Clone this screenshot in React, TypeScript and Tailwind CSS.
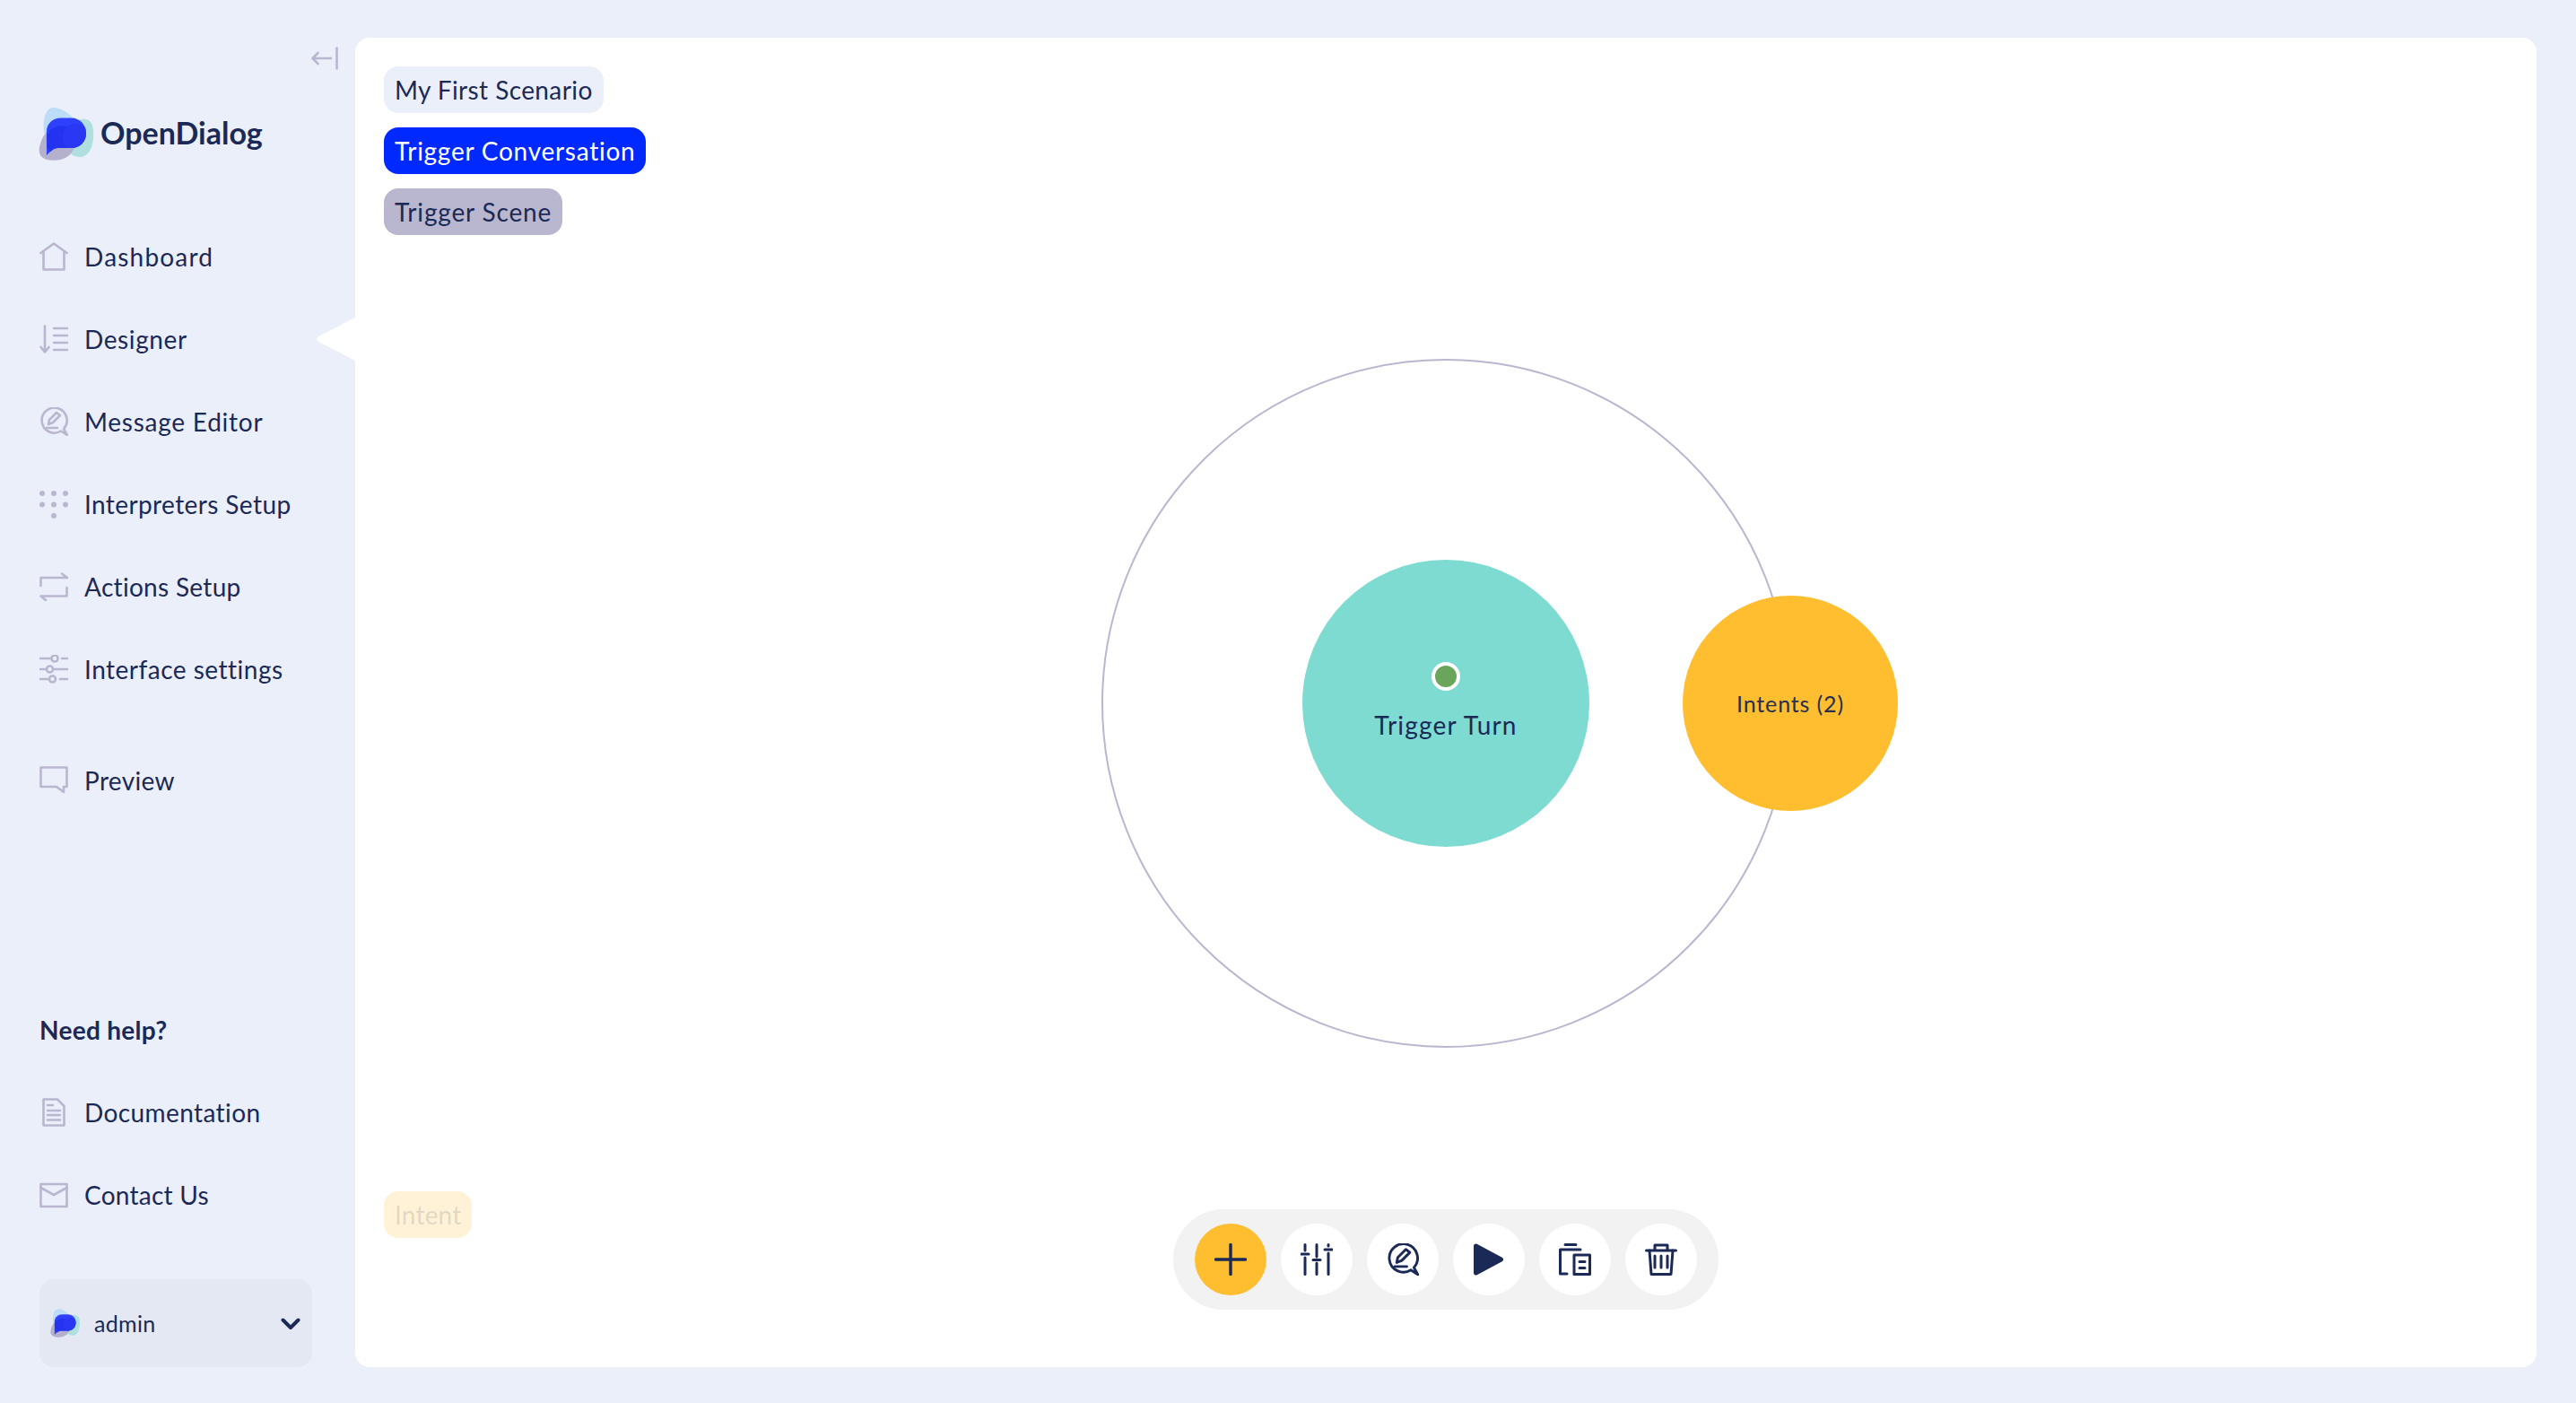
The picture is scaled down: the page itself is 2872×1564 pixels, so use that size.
import React from 'react';

const stroke = {
  fill: 'none',
  stroke: 'currentColor',
  strokeLinecap: 'round' as const,
  strokeLinejoin: 'round' as const,
};

function Logo({ className }: { className: string }) {
  return (
    <svg viewBox="40 55 190 190" className={className}>
      <defs>
        <clipPath id="bubble">
          <path d="M67 222V140C67 114 90 96 115 96H150C180 96 200 120 200 147C200 175 180 197 150 197H105C90 197 78 210 67 222Z" />
        </clipPath>
      </defs>
      <path fill="#bcdcf7" d="M57 130C55 90 68 60 90 60C115 62 145 80 165 105L165 130C140 190 100 190 75 170C62 160 58 150 57 130Z" />
      <path fill="#b0dfe0" d="M165 108C185 95 215 95 222 125C230 165 220 225 180 227C150 228 125 200 120 170Z" />
      <path fill="#b4b1cd" d="M42 205C45 170 65 130 100 125C140 125 165 160 160 195C150 225 120 240 85 238C60 238 42 225 42 205Z" />
      <path fill="#2e40fa" d="M67 222V140C67 114 90 96 115 96H150C180 96 200 120 200 147C200 175 180 197 150 197H105C90 197 78 210 67 222Z" />
      <g clipPath="url(#bubble)">
        <circle cx="115" cy="172" r="50" fill="#2433f0" />
        <circle cx="165" cy="160" r="45" fill="#2a38f4" />
      </g>
    </svg>
  );
}

const MessagePaths = () => (
  <>
    <path d="M27 24A14 14 0 1 0 24 26.5L31 31Z" />
    <path d="M10 19L11 14L19 6L23 9L15 17Z" />
    <path d="M8 23H20" />
  </>
);

const icons: Record<string, React.ReactNode> = {
  dashboard: (
    <>
      <path d="M1.5 12L16 1.5L30.5 12" />
      <path d="M4.5 10V30.5H27.5V10" />
    </>
  ),
  designer: (
    <>
      <path d="M6 1.5V30M1.5 25L6 30.5L10.5 25" />
      <path d="M16 4H31M16 12H31M16 20H31M16 28H31" />
    </>
  ),
  message: <MessagePaths />,
  interpreters: (
    <g fill="currentColor" stroke="none">
      <circle cx="3" cy="4" r="3" />
      <circle cx="16" cy="4" r="3" />
      <circle cx="29" cy="4" r="3" />
      <circle cx="3" cy="16.5" r="3" />
      <circle cx="16" cy="16.5" r="3" />
      <circle cx="29" cy="16.5" r="3" />
      <circle cx="16" cy="29" r="3" />
    </g>
  ),
  actions: (
    <>
      <path d="M1.5 15V6H31L25 1.5" />
      <path d="M30.5 17V26.5H1.5L7 31" />
    </>
  ),
  settings: (
    <>
      <path d="M1 4H13M25 4H31" />
      <circle cx="17" cy="4" r="3.5" />
      <path d="M1 16H7M16 16H31" />
      <circle cx="11.5" cy="16" r="3.5" />
      <path d="M1 27H10M23 27H31" />
      <circle cx="14.5" cy="27" r="3.5" />
    </>
  ),
  preview: <path d="M1.5 1.5H30.5V23H27V29L19 23H1.5Z" />,
  docs: (
    <>
      <path d="M4.5 1.5H20L27.5 9V30.5H4.5Z" />
      <path d="M9 8H15M9 14H23M9 19H23M9 24.5H23" />
    </>
  ),
  contact: (
    <>
      <path d="M1.5 4H30.5V29H1.5Z" />
      <path d="M1.5 8L16 16L30.5 8" />
    </>
  ),
};

function NavItem({
  icon,
  label,
  tracking,
  active,
}: {
  icon: string;
  label: string;
  tracking: string;
  active?: boolean;
}) {
  return (
    <div className="relative flex h-[92px] items-center pl-[44px]">
      <svg viewBox="0 0 32 32" strokeWidth={2.6} {...stroke} className="h-8 w-8 text-[#b9b7cf]">
        {icons[icon]}
      </svg>
      <span className={`ml-[18px] text-[28px] text-[#1b2956] ${tracking}`}>{label}</span>
      {active && (
        <svg viewBox="0 0 44 50" className="absolute top-[21px] right-0 h-[50px] w-[44px]">
          <path d="M44 1L3 22Q-1 25 3 28L44 49Z" fill="#ffffff" />
        </svg>
      )}
    </div>
  );
}

function ToolButton({ children, className }: { children: React.ReactNode; className: string }) {
  return <div className={`flex h-20 w-20 items-center justify-center rounded-full ${className}`}>{children}</div>;
}

export default function App() {
  return (
    <div className="flex h-screen w-full overflow-hidden bg-[#ebeffa] font-['Lato',sans-serif] text-[#1b2956]">
      <aside className="flex w-[396px] flex-col pb-[40px]">
        <div className="flex justify-end pt-[52px] pr-[19px]">
          <svg viewBox="0 0 30 26" strokeWidth={2.6} {...stroke} className="h-[26px] w-[30px] text-[#b9b7cf]">
            <path d="M1.5 13H22M7.5 7L1.5 13L7.5 19M28.5 1.5V24.5" />
          </svg>
        </div>
        <div className="mt-[40px] mb-[59px] flex h-[63px] items-center pl-[43px]">
          <Logo className="h-[63px] w-[63px]" />
          <span className="-mt-[3px] ml-[6px] text-[34px] leading-none font-bold">OpenDialog</span>
        </div>
        <NavItem icon="dashboard" label="Dashboard" tracking="tracking-[1.2px]" />
        <NavItem icon="designer" label="Designer" tracking="tracking-[0.6px]" active />
        <NavItem icon="message" label="Message Editor" tracking="tracking-[0.75px]" />
        <NavItem icon="interpreters" label="Interpreters Setup" tracking="tracking-[0.4px]" />
        <NavItem icon="actions" label="Actions Setup" tracking="tracking-[0.3px]" />
        <NavItem icon="settings" label="Interface settings" tracking="tracking-[0.5px]" />
        <div className="mt-8">
          <NavItem icon="preview" label="Preview" tracking="tracking-[0.35px]" />
        </div>
        <div className="mt-auto flex h-[92px] items-center pl-[44px] text-[28px] font-bold tracking-[0.3px]">Need help?</div>
        <NavItem icon="docs" label="Documentation" tracking="tracking-[0.4px]" />
        <NavItem icon="contact" label="Contact Us" tracking="tracking-[0.25px]" />
        <div className="mt-[48px] ml-[44px] flex h-[98px] w-[304px] items-center rounded-2xl bg-[#e4e8f3] pr-[13px] pl-[12px]">
          <Logo className="h-[34px] w-[34px]" />
          <span className="mt-[2px] ml-[15px] text-[25px] tracking-[0.3px]">admin</span>
          <svg viewBox="0 0 22 14" strokeWidth={4} {...stroke} className="mt-[2px] ml-auto h-[14px] w-[22px]">
            <path d="M2.5 2.5L11 11L19.5 2.5" />
          </svg>
        </div>
      </aside>

      <main className="relative my-[42px] mr-[44px] mb-[40px] flex-1 rounded-2xl bg-white">
        <div className="flex flex-col items-start gap-4 pt-8 pl-8 text-[28px] leading-[52px]">
          <div className="h-[52px] rounded-2xl bg-[#ebeffa] px-[12px] tracking-[0.4px]">My First Scenario</div>
          <div className="h-[52px] rounded-2xl bg-[#0029ff] px-[12px] tracking-[0.75px] text-white">Trigger Conversation</div>
          <div className="h-[52px] rounded-2xl bg-[#b9b7cf] px-[12px] tracking-[0.85px]">Trigger Scene</div>
        </div>

        {/* diagram, everything is placed from the centre of the big ring */}
        <div className="absolute top-[742px] left-1/2 h-0 w-0">
          <svg viewBox="0 0 770 770" className="absolute -top-[385px] -left-[385px] h-[770px] w-[770px]">
            <circle cx="385" cy="385" r="383" fill="none" stroke="#b9b7cf" strokeWidth={2} />
          </svg>
          <div className="absolute -top-[160px] -left-[160px] flex h-[320px] w-[320px] flex-col items-center rounded-full bg-[#7ddbd2] pt-[114px]">
            <div className="h-8 w-8 rounded-full border-4 border-white bg-[#6ba55b]" />
            <div className="mt-[21px] text-[28px] leading-[34px] tracking-[1.2px]">Trigger Turn</div>
          </div>
          <div className="absolute -top-[120px] left-[264px] flex h-[240px] w-[240px] items-center justify-center rounded-full bg-[#ffbe30] pt-[2px] text-[25px] tracking-[0.85px] text-[#28304f]">
            Intents (2)
          </div>
        </div>

        <div className="absolute bottom-[144px] left-8 h-[52px] rounded-2xl bg-[#ffbe30]/20 px-[12px] text-[28px] leading-[52px] tracking-[0.2px] text-[#1b2956]/15">
          Intent
        </div>

        <div className="absolute bottom-16 left-1/2 flex h-[112px] -translate-x-1/2 items-center gap-4 rounded-[56px] bg-[#f2f2f2] px-6">
          <ToolButton className="bg-[#ffbe30]">
            <svg viewBox="0 0 36 36" strokeWidth={3.4} {...stroke} className="h-9 w-9">
              <path d="M18 1.5V34.5M1.5 18H34.5" />
            </svg>
          </ToolButton>
          <ToolButton className="bg-white">
            <svg viewBox="0 0 36 36" strokeWidth={3} {...stroke} className="h-9 w-9">
              <path d="M5 1.5V8M5 16V34.5M1 12H9" />
              <path d="M18 1.5V15M18 22V34.5M14 18.5H22" />
              <path d="M31 1.5V3M31 11V34.5M27 7H35" />
            </svg>
          </ToolButton>
          <ToolButton className="bg-white">
            <svg viewBox="0 0 32 32" strokeWidth={2.6} {...stroke} className="h-9 w-9">
              <MessagePaths />
            </svg>
          </ToolButton>
          <ToolButton className="bg-white">
            <svg viewBox="0 0 36 36" className="h-9 w-9">
              <path d="M3.5 3L31.5 18L3.5 33Z" fill="currentColor" stroke="currentColor" strokeWidth={5} strokeLinejoin="round" />
            </svg>
          </ToolButton>
          <ToolButton className="bg-white">
            <svg viewBox="0 0 36 36" strokeWidth={3} {...stroke} className="h-9 w-9">
              <path d="M7 1.5H19M1.5 7H24M1.5 7V34H9" />
              <path d="M17 13H34.5V34.5H17Z" />
              <path d="M23 20.5H29M23 27.5H29" />
            </svg>
          </ToolButton>
          <ToolButton className="bg-white">
            <svg viewBox="0 0 36 36" strokeWidth={3} {...stroke} className="h-9 w-9">
              <path d="M1.5 8H34.5M11 8V2H25V8" />
              <path d="M5 8L7 34.5H29L31 8" />
              <path d="M11 14V27M18 14V27M25 14V27" />
            </svg>
          </ToolButton>
        </div>
      </main>
    </div>
  );
}
